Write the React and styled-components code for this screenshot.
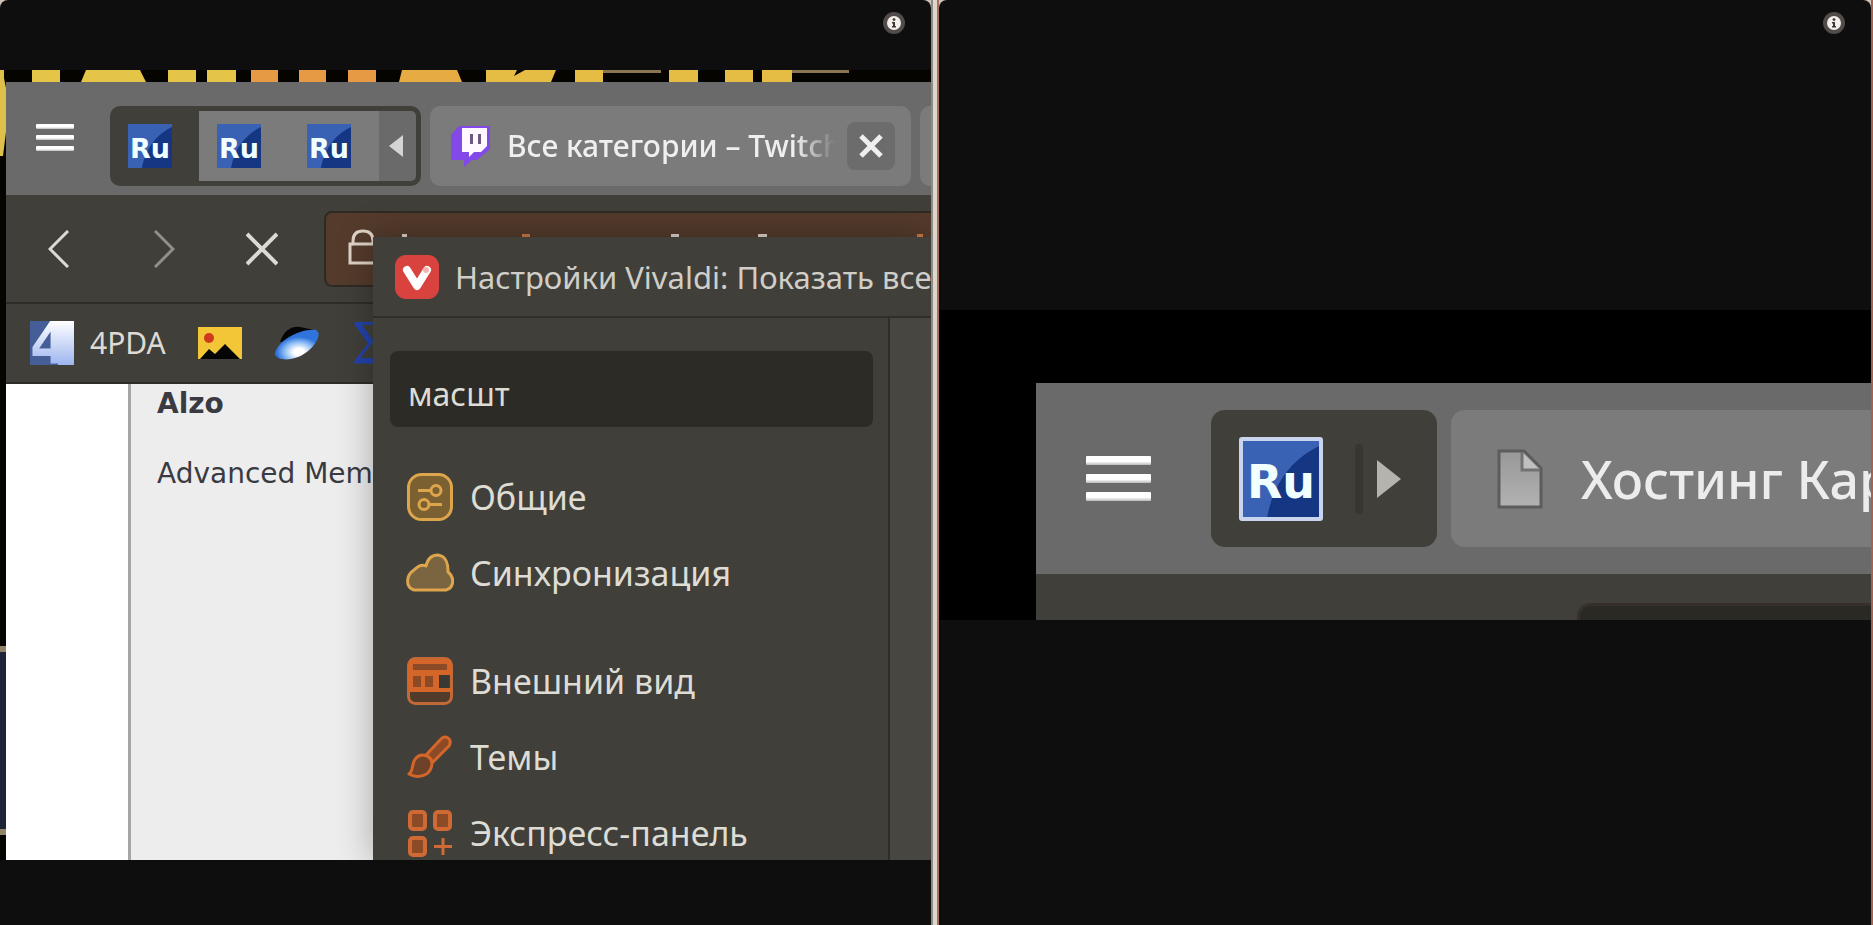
import React, { useState } from "react";
import styled, { createGlobalStyle } from "styled-components";

const RuIcon = ({ large }) => (
  <RuBadge $large={large}>
    <svg viewBox="0 0 44 44" preserveAspectRatio="none" aria-hidden="true">
      <rect width="44" height="44" fill="#153682" />
      <path d="M0 0H44V3C31 9 18 22 14 44H0Z" fill="#3a62b4" />
    </svg>
    <span>Ru</span>
  </RuBadge>
);

const MenuButton = ({ large }) => (
  <Burger type="button" aria-label="Меню" $large={large}>
    <i />
    <i />
    <i />
  </Burger>
);

const InfoButton = () => (
  <Info type="button" aria-label="Информация">
    <svg width="22" height="22" viewBox="0 0 22 22">
      <circle cx="11" cy="11" r="11" fill="#514c49" />
      <circle cx="11" cy="11" r="7" fill="#f3eeea" />
      <circle cx="11" cy="7.6" r="1.4" fill="#3a3634" />
      <path d="M9 10h3v4h1v1.4H9V14h1v-2.6H9z" fill="#3a3634" />
    </svg>
  </Info>
);

const GeneralIcon = () => (
  <svg width="48" height="48" viewBox="0 0 48 48" fill="none" stroke="#dda64c" strokeWidth="3">
    <rect x="2.5" y="1.5" width="43" height="45" rx="13" fill="#7b6132" />
    <path d="M12 17.5h13M23 31.5h13" />
    <circle cx="30" cy="17.5" r="5" />
    <circle cx="18" cy="31.5" r="5" />
  </svg>
);

const CloudIcon = () => (
  <svg width="48" height="48" viewBox="0 0 48 48" fill="#7b6440" stroke="#dda64c" strokeWidth="3" strokeLinejoin="round">
    <path d="M8 41C-1 38 0 26 8 21C12 17 16 15 20 17C22 8 27 6 32 6C39 7 42 12 42 23C49 29 48 39 40 41Z" />
  </svg>
);

const WindowIcon = () => (
  <svg width="48" height="48" viewBox="0 0 48 48">
    <rect x="2.5" y="1.5" width="43" height="45" rx="7" fill="#513b2a" stroke="#c2693a" strokeWidth="3" />
    <path d="M2 15V8q0-6 6-6h32q6 0 6 6v7z" fill="#d5662a" />
    <rect x="7" y="7" width="34" height="6" fill="#8d4a26" />
    <path d="M2 13h44v5H2zM2 31h44v4H2z" fill="#d5662a" />
    <path d="M2 18h31v13H2z" fill="#d5662a" />
    <path d="M7 19h8v11H7zM19 19h8v11h-8z" fill="#8d4a26" />
    <path d="M33 18h10v13H33z" fill="#3a3833" />
  </svg>
);

const BrushIcon = () => (
  <svg width="48" height="48" viewBox="0 0 48 48" fill="#6e4228" stroke="#d5662a" strokeWidth="3" strokeLinejoin="round">
    <path d="M20 22L35 6C39 2 47 5 43 13L27 29Z" fill="#8d4a26" />
    <path d="M3 41C8 38 5 30 10 25C16 19 26 23 26 31C25 43 12 46 3 41Z" />
  </svg>
);

const DialIcon = () => (
  <svg width="48" height="48" viewBox="0 0 48 48" fill="#8d4a26" stroke="#cf6a35" strokeWidth="4">
    <rect x="4" y="3" width="15" height="17" rx="3" />
    <rect x="29" y="3" width="15" height="17" rx="3" />
    <rect x="4" y="29" width="15" height="17" rx="3" />
    <path d="M37 29v17M28 37.5h18" strokeWidth="3" />
  </svg>
);

const groups = [
  [
    { label: "Общие", Icon: GeneralIcon },
    { label: "Синхронизация", Icon: CloudIcon },
  ],
  [
    { label: "Внешний вид", Icon: WindowIcon },
    { label: "Темы", Icon: BrushIcon },
    { label: "Экспресс-панель", Icon: DialIcon },
  ],
];

const SettingsWindow = () => {
  const [query, setQuery] = useState("масшт");

  return (
    <Settings>
      <SettingsTitle>
        <svg width="44" height="44" viewBox="0 0 44 44" aria-hidden="true">
          <rect width="44" height="44" rx="11" fill="#d9433f" />
          <path d="M12 15L22 31L32 15" fill="none" stroke="#fff" strokeWidth="8" strokeLinecap="round" strokeLinejoin="round" />
          <circle cx="31" cy="15" r="3" fill="#f3b5b2" />
        </svg>
        <span>Настройки Vivaldi: Показать все</span>
      </SettingsTitle>
      <SettingsBody>
        <Sidebar>
          <SearchBox
            type="text"
            aria-label="Поиск настроек"
            value={query}
            onChange={(e) => setQuery(e.target.value)}
          />
          {groups.map((items) => (
            <Group key={items[0].label}>
              {items.map(({ label, Icon }) => (
                <Item key={label} href="#">
                  <Icon />
                  <span>{label}</span>
                </Item>
              ))}
            </Group>
          ))}
        </Sidebar>
        <SettingsPage />
      </SettingsBody>
    </Settings>
  );
};

const BrowserShot = () => (
  <Shot>
    <Wallpaper viewBox="0 0 931 790" preserveAspectRatio="xMinYMin slice" aria-hidden="true">
      <rect width="931" height="790" fill="#050401" />
      <path
        d="M32 0h28v12H32zM86 0h54l6 12H81zM168 0h28v12h-28zM207 0h29v12h-29z"
        fill="#e5c548"
      />
      <path d="M251 0h27v12h-27zM299 0h27v12h-27zM348 0h28v12h-28z" fill="#e59a43" />
      <path d="M402 0h55l5 12h-63z" fill="#e6ac43" />
      <path
        d="M486 0h31l-3 6 11-6h31l-5 12h-65zM575 0h28v12h-28zM669 0h29v12h-29zM725 0h28v12h-28zM762 0h30v12h-30z"
        fill="#e5bd45"
      />
      <path d="M603 0h58v3h-58zM792 0h57v3h-57z" fill="#8a7550" />
      <path d="M0 0h4v8l2 10v44l-3 24H0z" fill="#dcc04a" />
      <path d="M0 576h6v6H0zM0 759h6v6H0z" fill="#8f8468" />
      <path d="M0 582h6v177H0z" fill="#1f2438" />
    </Wallpaper>
    <Browser>
      <TabBar>
        <MenuButton />
        <Stack>
          <StackTab type="button" $active>
            <RuIcon />
          </StackTab>
          <StackTab type="button">
            <RuIcon />
          </StackTab>
          <StackTab type="button">
            <RuIcon />
          </StackTab>
          <StackArrow type="button" aria-label="Свернуть группу">
            <svg width="14" height="22" viewBox="0 0 14 22">
              <path d="M14 0V22L0 11Z" fill="#d4d4d4" />
            </svg>
          </StackArrow>
        </Stack>
        <Tab>
          <svg width="42" height="42" viewBox="0 0 42 42" aria-hidden="true">
            <path d="M9 1H40V24L27 35H22L14 42V35H1V10Z" fill="#8349e8" />
            <path d="M12 3H37V21L31 27H24L19 32V27H12Z" fill="#fff8ff" />
            <path d="M20 9h3v10h-3zM28 9h3v10h-3z" fill="#6d5a80" />
          </svg>
          <TabTitle>Все категории – Twitch</TabTitle>
          <CloseButton type="button" aria-label="Закрыть вкладку">
            <svg width="24" height="24" viewBox="0 0 24 24" fill="none" stroke="#efefef" strokeWidth="5">
              <path d="M2 2L22 22M22 2L2 22" />
            </svg>
          </CloseButton>
        </Tab>
        <NextTab />
      </TabBar>
      <Toolbar>
        <NavButton type="button" aria-label="Назад">
          <svg width="22" height="38" viewBox="0 0 22 38" fill="none" stroke="#dcdad3" strokeWidth="3">
            <path d="M20 1L2 19L20 37" />
          </svg>
        </NavButton>
        <NavButton type="button" aria-label="Вперёд">
          <svg width="22" height="38" viewBox="0 0 22 38" fill="none" stroke="#8f8e88" strokeWidth="3">
            <path d="M2 1L20 19L2 37" />
          </svg>
        </NavButton>
        <NavButton type="button" aria-label="Остановить" $narrow>
          <svg width="32" height="34" viewBox="0 0 32 34" fill="none" stroke="#dcdad3" strokeWidth="4">
            <path d="M1 2L31 32M31 2L1 32" />
          </svg>
        </NavButton>
        <Address>
          <svg width="32" height="36" viewBox="0 0 32 36" fill="none" stroke="#e0d3c8" strokeWidth="3">
            <path d="M5 15V12Q5 2 15 2T25 12V15Z" />
            <path d="M5 15H2V34H30V15H25" />
          </svg>
          <svg width="550" height="12" viewBox="0 0 550 12" aria-hidden="true">
            <path d="M22 5h5v3h-5zM291 5h8v3h-8zM378 5h9v3h-9z" fill="#ddd3ca" />
            <path d="M142 5h8v3h-8zM537 5h6v3h-6z" fill="#c87942" />
          </svg>
        </Address>
      </Toolbar>
      <Bookmarks>
        <Bookmark href="#">
          <svg width="44" height="44" viewBox="0 0 44 44" aria-hidden="true">
            <defs>
              <linearGradient id="four" gradientUnits="userSpaceOnUse" x1="0" y1="0" x2="0" y2="44">
                <stop offset="0" stopColor="#fff" />
                <stop offset="1" stopColor="#9db5ef" />
              </linearGradient>
            </defs>
            <rect width="44" height="44" fill="#465e98" />
            <path d="M20 0H44V44H28V8H16Z" fill="url(#four)" />
            <text
              x="0"
              y="42"
              fontFamily="DejaVu Sans, sans-serif"
              fontWeight="700"
              fontSize="56"
              fill="url(#four)"
            >
              4
            </text>
          </svg>
          <span>4PDA</span>
        </Bookmark>
        <Bookmark href="#" aria-label="Картинки">
          <svg width="44" height="32" viewBox="0 0 44 32">
            <rect width="44" height="32" fill="#f2c636" />
            <circle cx="11" cy="11" r="5" fill="#cf3a1c" />
            <path d="M2 32L11 22L17 27L27 17L42 32Z" fill="#050505" />
          </svg>
        </Bookmark>
        <Bookmark href="#" aria-label="Новости">
          <svg width="46" height="34" viewBox="0 0 46 34">
            <defs>
              <radialGradient id="disc" cx="0.55" cy="0.75" r="0.6">
                <stop offset="0.2" stopColor="#fff" />
                <stop offset="0.55" stopColor="#8dbdf5" />
                <stop offset="0.85" stopColor="#2f73dc" />
              </radialGradient>
            </defs>
            <path d="M6 16C10 4 18 0 26 1L40 4L24 14Z" fill="#050507" />
            <path d="M1 28C3 14 28 2 42 4C50 8 38 26 24 31C14 35 2 34 1 28Z" fill="url(#disc)" />
          </svg>
        </Bookmark>
        <Sigma href="#">Σ</Sigma>
      </Bookmarks>
      <Page>
        <PageMargin />
        <PageText>
          <h2>Alzo</h2>
          <p>Advanced Mem</p>
        </PageText>
      </Page>
    </Browser>
    <SettingsWindow />
  </Shot>
);

const TabShot = () => (
  <CloseUp>
    <TabBar $large>
      <MenuButton large />
      <LargeStack>
        <RuIcon large />
        <Separator />
        <StackArrow type="button" aria-label="Развернуть группу">
          <svg width="24" height="38" viewBox="0 0 24 38">
            <path d="M0 0V38L24 19Z" fill="#b4b3ae" />
          </svg>
        </StackArrow>
      </LargeStack>
      <LargeTab>
        <svg width="46" height="60" viewBox="0 0 46 60" aria-hidden="true">
          <defs>
            <linearGradient id="sheet" x1="0" y1="0" x2="0" y2="1">
              <stop offset="0" stopColor="#989898" />
              <stop offset="1" stopColor="#b2b2b2" />
            </linearGradient>
          </defs>
          <path d="M2 2H27L44 19V58H2Z" fill="url(#sheet)" stroke="#5c5c5c" strokeWidth="3" />
          <path d="M25 3V21H43" fill="#c0c0c0" stroke="#727272" strokeWidth="3" />
        </svg>
        <span>Хостинг Кар</span>
      </LargeTab>
    </TabBar>
    <LargeToolbar>
      <LargeAddress />
    </LargeToolbar>
  </CloseUp>
);

const App = () => (
  <>
    <GlobalStyle />
    <Gallery>
      <Pane>
        <InfoButton />
        <BrowserShot />
      </Pane>
      <Divider />
      <Pane>
        <InfoButton />
        <TabShot />
      </Pane>
      <Edge />
    </Gallery>
  </>
);

export default App;

const GlobalStyle = createGlobalStyle`
  * {
    box-sizing: border-box;
  }

  body {
    margin: 0;
    font-family: "Noto Sans", "Open Sans", sans-serif;
    background: #cfc4bc;
  }

  button {
    padding: 0;
    border: 0;
    background: transparent;
    font-family: inherit;
    cursor: pointer;
  }

  a {
    text-decoration: none;
  }

  svg {
    display: block;
    flex-shrink: 0;
  }
`;

const Gallery = styled.main`
  display: grid;
  grid-template-columns: minmax(0, 931fr) 8px minmax(0, 932fr) 2px;
  min-height: 100vh;
`;

const Pane = styled.section`
  position: relative;
  display: flex;
  flex-direction: column;
  justify-content: center;
  padding-top: 5px;
  border-radius: 8px 8px 0 0;
  overflow: hidden;
  background: #0e0e0e;
`;

const Divider = styled.div`
  border-left: 2px solid #8f8b88;
  border-right: 2px solid #a5705f;
  background: #ded5cb;
`;

const Edge = styled.div`
  background: #a8604f;
`;

const Info = styled.button`
  position: absolute;
  top: 12px;
  right: 26px;
  width: 22px;
  height: 22px;
  z-index: 2;
`;

const Shot = styled.div`
  position: relative;
  padding: 12px 0 0 6px;
  overflow: hidden;
`;

const Wallpaper = styled.svg`
  position: absolute;
  inset: 0;
  width: 100%;
  height: 100%;
`;

const Browser = styled.div`
  position: relative;
  overflow: hidden;
`;

const TabBar = styled.div`
  display: flex;
  align-items: flex-start;
  height: ${(p) => (p.$large ? "191px" : "113px")};
  padding-top: ${(p) => (p.$large ? "27px" : "24px")};
  padding-left: ${(p) => (p.$large ? "50px" : "30px")};
  background: #6a6a6a;
`;

const Burger = styled.button`
  display: flex;
  flex-direction: column;
  flex-shrink: 0;
  gap: ${(p) => (p.$large ? "9px" : "6px")};
  width: ${(p) => (p.$large ? "65px" : "38px")};
  margin-top: ${(p) => (p.$large ? "46px" : "18px")};
  margin-right: ${(p) => (p.$large ? "60px" : "36px")};

  i {
    height: ${(p) => (p.$large ? "9px" : "5px")};
    border-radius: 1px;
    background: linear-gradient(#fff 60%, #b9b9b9);
  }
`;

const Stack = styled.div`
  display: flex;
  flex-shrink: 0;
  height: 80px;
  margin-right: 9px;
  border: 5px solid #413f39;
  border-radius: 10px;
  background: #413f39;
`;

const StackTab = styled.button`
  display: flex;
  align-items: center;
  width: ${(p) => (p.$active ? "84px" : "90px")};
  padding-left: ${(p) => (p.$active ? "13px" : "18px")};
  background: ${(p) => (p.$active ? "#413f39" : "#7b7b7b")};
`;

const StackArrow = styled.button`
  display: flex;
  align-items: center;
  justify-content: center;

  ${Stack} & {
    width: 37px;
    padding-right: 3px;
    border-radius: 0 5px 5px 0;
    background: #6a6a6a;
  }
`;

const RuBadge = styled.span`
  position: relative;
  display: flex;
  align-items: flex-end;
  justify-content: center;
  flex-shrink: 0;
  width: ${(p) => (p.$large ? "84px" : "44px")};
  height: ${(p) => (p.$large ? "84px" : "44px")};
  border: ${(p) => (p.$large ? "4px solid #c9d4ee" : "0")};
  border-radius: ${(p) => (p.$large ? "3px" : "0")};

  svg {
    position: absolute;
    inset: 0;
    width: 100%;
    height: 100%;
  }

  span {
    position: relative;
    padding-bottom: ${(p) => (p.$large ? "12px" : "6px")};
    color: #f0ffff;
    font-family: "DejaVu Sans", sans-serif;
    font-size: ${(p) => (p.$large ? "46px" : "27px")};
    font-weight: 700;
    line-height: 1;
  }
`;

const Tab = styled.div`
  display: flex;
  align-items: center;
  flex: 0 0 481px;
  min-width: 0;
  height: 80px;
  padding: 0 16px 0 20px;
  border-radius: 10px;
  background: #7b7b7b;
`;

const TabTitle = styled.span`
  flex: 1;
  min-width: 0;
  margin: 0 12px 0 15px;
  overflow: hidden;
  white-space: nowrap;
  color: #efefef;
  font-size: 30px;
  font-weight: 500;
  line-height: 48px;
  mask-image: linear-gradient(90deg, #000 88%, transparent);
`;

const CloseButton = styled.button`
  display: flex;
  align-items: center;
  justify-content: center;
  flex-shrink: 0;
  width: 48px;
  height: 48px;
  border-radius: 8px;
  background: #6c6c6c;
`;

const NextTab = styled.div`
  flex: 1;
  height: 80px;
  margin-left: 9px;
  border-radius: 10px 0 0 10px;
  background: #7b7b7b;
`;

const Toolbar = styled.div`
  display: flex;
  align-items: center;
  height: 109px;
  border-bottom: 2px solid #2f2d28;
  background: #413f39;
`;

const NavButton = styled.button`
  display: flex;
  align-items: center;
  justify-content: center;
  flex-shrink: 0;
  width: ${(p) => (p.$narrow ? "92px" : "105px")};
  height: 60px;
`;

const Address = styled.div`
  display: flex;
  align-items: flex-start;
  flex: 1;
  height: 76px;
  min-width: 0;
  margin-left: 16px;
  padding: 16px 0 0 22px;
  overflow: hidden;
  border: 2px solid #302a24;
  border-right: 0;
  border-radius: 8px 0 0 8px;
  background: #543b2c;
`;

const Bookmarks = styled.nav`
  display: flex;
  align-items: center;
  gap: 32px;
  height: 80px;
  padding-left: 24px;
  border-bottom: 2px solid #2f2d28;
  background: #413f39;
`;

const Bookmark = styled.a`
  display: flex;
  align-items: center;
  gap: 16px;
  color: #dddbd4;
  font-size: 30px;
  line-height: 44px;
`;

const Sigma = styled.a`
  color: #2443ab;
  font-family: "Liberation Serif", serif;
  font-size: 64px;
  line-height: 64px;
`;

const Page = styled.div`
  display: flex;
  height: 476px;
  background: #ededed;
`;

const PageMargin = styled.div`
  width: 125px;
  border-right: 3px solid #a6a6a6;
  background: #fff;
`;

const PageText = styled.article`
  padding-left: 26px;
  color: #3a3a42;
  font-family: "DejaVu Sans", sans-serif;
  font-size: 28px;
  line-height: 40px;

  h2 {
    margin: 0 0 30px;
    font-size: 28px;
    font-weight: 700;
  }

  p {
    margin: 0;
    white-space: nowrap;
  }
`;

const Settings = styled.div`
  position: absolute;
  top: 167px;
  right: 0;
  bottom: 0;
  left: 373px;
  display: flex;
  flex-direction: column;
  overflow: hidden;
  background: #413f39;
  box-shadow: 0 0 34px rgba(0, 0, 0, 0.3);
`;

const SettingsTitle = styled.header`
  display: flex;
  align-items: center;
  flex-shrink: 0;
  gap: 16px;
  height: 81px;
  padding-left: 22px;
  border-bottom: 2px solid #302e29;
  color: #cfcec8;
  font-size: 31px;
  line-height: 48px;
  white-space: nowrap;
`;

const SettingsBody = styled.div`
  display: flex;
  flex: 1;
`;

const Sidebar = styled.nav`
  flex: 0 0 515px;
  padding: 33px 15px 0 17px;
`;

const SettingsPage = styled.div`
  flex: 1;
  border-left: 2px solid #2f2d28;
  background: #484641;
`;

const SearchBox = styled.input`
  display: block;
  width: 100%;
  height: 76px;
  margin-bottom: 32px;
  padding: 8px 18px 0;
  border: 0;
  border-radius: 8px;
  outline: 0;
  background: #2d2b26;
  color: #dddcd5;
  font-family: inherit;
  font-size: 32px;
`;

const Group = styled.div`
  margin-bottom: 32px;
`;

const Item = styled.a`
  display: flex;
  align-items: center;
  gap: 16px;
  height: 76px;
  padding-left: 16px;
  color: #dddcd5;
  font-size: 34px;
  line-height: 48px;
  white-space: nowrap;
`;

const CloseUp = styled.div`
  padding: 73px 0 0 97px;
  overflow: hidden;
  background: #000;
`;

const LargeStack = styled.div`
  display: flex;
  align-items: center;
  flex-shrink: 0;
  width: 226px;
  height: 137px;
  margin-right: 14px;
  padding-left: 28px;
  border-radius: 14px;
  background: #413f39;
`;

const Separator = styled.div`
  width: 8px;
  height: 70px;
  margin: 0 14px 0 32px;
  border-radius: 4px;
  background: #383630;
`;

const LargeTab = styled.div`
  display: flex;
  align-items: center;
  flex: 1;
  gap: 38px;
  min-width: 0;
  height: 137px;
  padding-left: 46px;
  overflow: hidden;
  border-radius: 14px 0 0 14px;
  background: #7b7b7b;
  color: #ececec;
  font-size: 52px;
  font-weight: 500;
  line-height: 80px;
  white-space: nowrap;
`;

const LargeToolbar = styled.div`
  height: 46px;
  padding: 29px 0 0 541px;
  overflow: hidden;
  background: #413f39;
`;

const LargeAddress = styled.div`
  height: 60px;
  border: 3px solid #353029;
  border-right: 0;
  border-radius: 14px 0 0 0;
  background: #2b2924;
`;
